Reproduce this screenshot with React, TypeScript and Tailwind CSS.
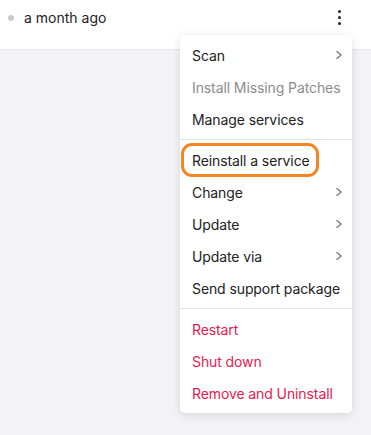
import React from "react";

type Item = {
  label: string;
  sub?: boolean;
  muted?: boolean;
  danger?: boolean;
  highlight?: boolean;
};

const groups: Item[][] = [
  [
    { label: "Scan", sub: true },
    { label: "Install Missing Patches", muted: true },
    { label: "Manage services" },
  ],
  [
    { label: "Reinstall a service", highlight: true },
    { label: "Change", sub: true },
    { label: "Update", sub: true },
    { label: "Update via", sub: true },
    { label: "Send support package" },
  ],
  [
    { label: "Restart", danger: true },
    { label: "Shut down", danger: true },
    { label: "Remove and Uninstall", danger: true },
  ],
];

function Chevron() {
  return (
    <svg width="8" height="10" viewBox="0 0 8 10" fill="none">
      <path d="M1.5 1.2 L6.2 5 L1.5 8.8" stroke="#6b6b6b" strokeWidth="1.1" />
    </svg>
  );
}

function MenuRow({ item }: { item: Item }) {
  const color = item.danger
    ? "text-[#e8194f]"
    : item.muted
      ? "text-[#8c8c8c]"
      : "text-[#222222]";
  return (
    <div className={`relative flex h-8 items-center justify-between whitespace-nowrap pl-3 pr-[9px] text-[14px] tracking-[-0.1px] ${color}`}>
      <span>{item.label}</span>
      {item.sub && <Chevron />}
      {item.highlight && (
        <div className="pointer-events-none absolute left-[1px] top-[-1px] h-[34px] w-[138px] rounded-[11px] border-[3.5px] border-[#f7841f]" />
      )}
    </div>
  );
}

export default function App() {
  return (
    <div
      className="relative h-[435px] w-[371px] overflow-hidden bg-[#f3f3f7]"
      style={{ fontFamily: "Inter, 'Noto Sans', sans-serif" }}
    >
      <div className="flex h-[50px] items-start justify-between border-b border-[#e6e6ec] bg-white pl-[8px] pr-[30px] pt-[7px]">
        <div className="flex items-center gap-[10px]">
          <span className="h-[6px] w-[6px] rounded-full bg-[#c9c9c9]" />
          <span className="text-[14px] text-[#222222]">a month ago</span>
        </div>
        <div className="mt-[3px] flex flex-col items-center gap-[3px]">
          <span className="h-[3px] w-[3px] rounded-full bg-[#222]" />
          <span className="h-[3px] w-[3px] rounded-full bg-[#222]" />
          <span className="h-[3px] w-[3px] rounded-full bg-[#222]" />
        </div>
      </div>

      <div className="absolute left-[180px] top-[35px] w-[172px] rounded-[5px] bg-white py-1 shadow-[0_2px_10px_rgba(0,0,0,0.12)]">
        {groups.map((g, gi) => (
          <div key={gi}>
            {gi > 0 && <div className="my-1 h-px bg-[#e6e6ea]" />}
            {g.map((item) => (
              <MenuRow key={item.label} item={item} />
            ))}
          </div>
        ))}
      </div>
    </div>
  );
}
